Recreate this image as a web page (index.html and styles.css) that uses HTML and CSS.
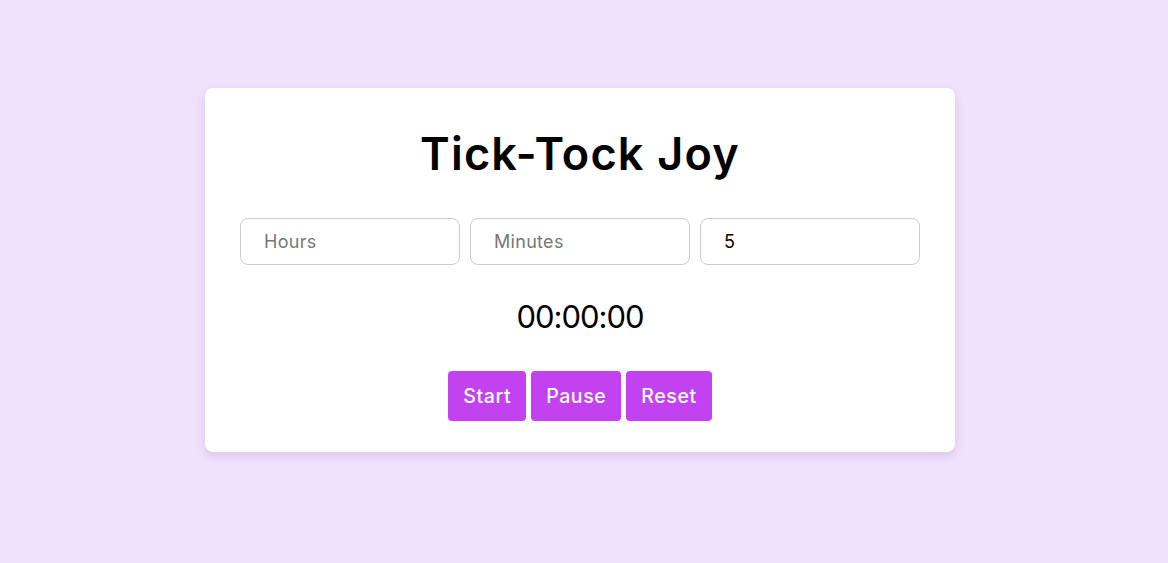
FILE: index.html
```html
<!DOCTYPE html>
<html>
<head>
<meta charset="utf-8">
<link rel="stylesheet" href="styles.css">
</head>
<body>
<div class="page">
  <div class="card">
    <h1 class="title">Tick-Tock Joy</h1>
    <div class="inputs">
      <input class="field" type="text" placeholder="Hours">
      <input class="field" type="text" placeholder="Minutes">
      <input class="field" type="text" placeholder="Seconds" value="5">
    </div>
    <div class="timer">00:00:00</div>
    <div class="buttons">
      <button class="btn">Start</button>
      <button class="btn">Pause</button>
      <button class="btn">Reset</button>
    </div>
  </div>
</div>
</body>
</html>
```

FILE: styles.css
```css
html, body {
  margin: 0;
  padding: 0;
  background: #f0e1fc;
  font-family: Inter, "Noto Sans", sans-serif;
}
.page {
  height: 563px;
  display: flex;
  justify-content: center;
  padding: 88px 8px 0 0;
  box-sizing: border-box;
}
.card {
  width: 750px;
  height: 364px;
  box-sizing: border-box;
  background: #fff;
  border-radius: 8px;
  box-shadow: 0 4px 10px rgba(120, 80, 160, 0.18);
  padding: 30px 35px;
  display: flex;
  flex-direction: column;
  align-items: center;
}
.title {
  margin: 8px 0 0;
  font-size: 45px;
  font-weight: 600;
  line-height: 56px;
  color: #000;
  letter-spacing: 1.2px;
}
.inputs {
  margin-top: 36px;
  display: flex;
  gap: 10px;
  width: 100%;
}
.field {
  width: 220px;
  height: 47px;
  box-sizing: border-box;
  border: 1px solid #ccc;
  border-radius: 8px;
  padding: 0 23px;
  font-family: inherit;
  font-size: 18px;
  color: #000;
  outline: none;
  letter-spacing: 0.3px;
}
.field::placeholder {
  color: #777;
}
.timer {
  margin-top: 32px;
  font-size: 31px;
  line-height: 40px;
  color: #000;
  letter-spacing: -1px;
}
.buttons {
  margin-top: 34px;
  display: flex;
  gap: 5px;
}
.btn {
  height: 50px;
  padding: 0 15px;
  border: none;
  border-radius: 4px;
  background: #c342ef;
  color: #fff;
  font-family: inherit;
  font-size: 19.5px;
  font-weight: 500;
  letter-spacing: 0.6px;
}
```
